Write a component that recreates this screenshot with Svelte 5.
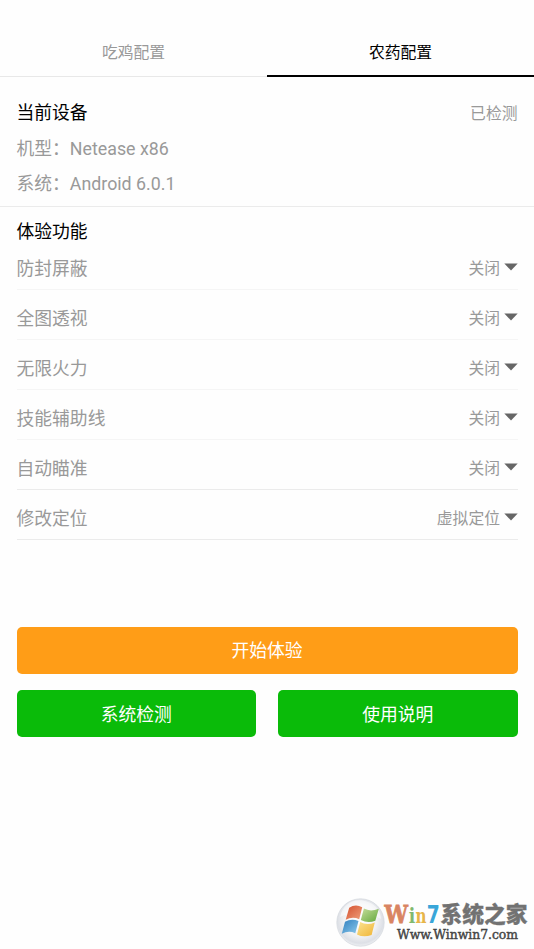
<script>
  let activeTab = 1;
  const tabs = ['吃鸡配置', '农药配置'];

  const device = [
    { label: '机型：', value: 'Netease x86' },
    { label: '系统：', value: 'Android 6.0.1' }
  ];

  const features = [
    { name: '防封屏蔽', value: '关闭' },
    { name: '全图透视', value: '关闭' },
    { name: '无限火力', value: '关闭' },
    { name: '技能辅助线', value: '关闭' },
    { name: '自动瞄准', value: '关闭' },
    { name: '修改定位', value: '虚拟定位' }
  ];
</script>

<main>
  <nav>
    {#each tabs as tab, i}
      <button class="tab" class:active={activeTab === i} on:click={() => (activeTab = i)}>{tab}</button>
    {/each}
  </nav>

  <section class="device">
    <div class="line">
      <h2>当前设备</h2>
      <span class="status">已检测</span>
    </div>
    {#each device as item}
      <div class="line">{item.label}{item.value}</div>
    {/each}
  </section>

  <section class="features">
    <h2>体验功能</h2>
    {#each features as feature, i}
      <div class="feature" class:strong={i > 3}>
        <span class="label">{feature.name}</span>
        <span class="select">
          {feature.value}
          <svg width="14" height="8" viewBox="0 0 14 8">
            <path d="M.3.6h13.4L7 7.4z" fill="#666" />
          </svg>
        </span>
      </div>
    {/each}
  </section>

  <div class="actions">
    <button class="btn start">开始体验</button>
    <div class="pair">
      <button class="btn">系统检测</button>
      <button class="btn">使用说明</button>
    </div>
  </div>

  <svg class="watermark" width="204" height="59" viewBox="0 0 204 59">
    <defs>
      <radialGradient id="orb" cx="50%" cy="45%" r="55%">
        <stop offset="0" stop-color="#fff" />
        <stop offset=".62" stop-color="#f1f2f4" />
        <stop offset=".88" stop-color="#dde0e6" />
        <stop offset="1" stop-color="#eef0f3" />
      </radialGradient>
      <linearGradient id="red" x2="1" y2="1">
        <stop offset="0" stop-color="#d4502f" />
        <stop offset="1" stop-color="#efa07c" />
      </linearGradient>
      <linearGradient id="green" x2="1" y2="1">
        <stop offset="0" stop-color="#c5dd9b" />
        <stop offset="1" stop-color="#63a83c" />
      </linearGradient>
      <linearGradient id="blue" x2="1" y2="1">
        <stop offset="0" stop-color="#2f7fbe" />
        <stop offset="1" stop-color="#8cc9ec" />
      </linearGradient>
      <linearGradient id="yellow" x2="1" y2="1">
        <stop offset="0" stop-color="#fbe392" />
        <stop offset="1" stop-color="#f0b434" />
      </linearGradient>
    </defs>
    <circle cx="30.5" cy="32.5" r="23.7" fill="url(#orb)" stroke="#d3d7dd" stroke-width=".7" />
    <path d="M10 27C13 12 27 7 38 12C47 15 51 23 51 29C38 22 23 21 10 27z" fill="#fff" opacity=".5" />
    <path d="M19.2 17.7Q25.5 13.6 32.2 17.2L29.2 29.2Q22.4 26 15.7 29.8z" fill="url(#red)" />
    <path d="M33.9 18.6Q40.5 22.2 48.8 18.7L45.3 30.8Q37.7 33.6 30.8 30z" fill="url(#green)" />
    <path d="M15 31.7Q21.6 28 28.5 31L25.3 43.2Q18.7 40 11.8 43.7z" fill="url(#blue)" />
    <path d="M30.2 32Q36.9 35.6 44.8 32.4L41.6 44.9Q33.7 48 27 44.4z" fill="url(#yellow)" />

    <g class="brand">
      <text class="w" x="54.5" y="32.5" textLength="23.5" lengthAdjust="spacingAndGlyphs">W</text>
      <text class="i" x="78.8" y="32.5" textLength="6.5" lengthAdjust="spacingAndGlyphs">i</text>
      <text class="n" x="85.5" y="32.5" textLength="11" lengthAdjust="spacingAndGlyphs">n</text>
      <text class="seven" x="96.7" y="32.5" textLength="13" lengthAdjust="spacingAndGlyphs">7</text>
    </g>
    <text class="name" x="110.5" y="32" textLength="87" lengthAdjust="spacingAndGlyphs">系统之家</text>
    <text class="url" x="67" y="49" textLength="121" lengthAdjust="spacingAndGlyphs">Www.Winwin7.com</text>
  </svg>
</main>

<style>
  :global(body) {
    margin: 0;
    background: #fefefe;
  }

  main {
    position: relative;
    height: 949px;
    overflow: hidden;
    font-family: Roboto, 'Noto Sans CJK SC', sans-serif;
    font-size: 17.8px;
    color: #999;
  }

  button {
    border: 0;
    padding: 0;
    font-family: inherit;
    cursor: pointer;
  }

  nav {
    display: flex;
    height: 77px;
  }

  .tab {
    flex: 1;
    box-sizing: border-box;
    padding-top: 26px;
    border-bottom: 1px solid #e8e8e8;
    background: none;
    font-size: 15.8px;
    color: #999;
  }

  .tab.active {
    padding-top: 27px;
    border-bottom: 2px solid #000;
    color: #000;
  }

  h2 {
    margin: 0;
    font-size: 17.8px;
    font-weight: 400;
    color: #000;
  }

  .device {
    box-sizing: border-box;
    height: 130px;
    padding: 18px 16.5px 0;
    border-bottom: 1px solid #ebebeb;
  }

  .line {
    display: flex;
    justify-content: space-between;
    height: 35.5px;
    line-height: 35.5px;
  }

  .status {
    padding-top: 1px;
    font-size: 15.8px;
  }

  .features {
    padding: 16px 16.5px 0;
  }

  .features h2 {
    height: 17px;
    line-height: 18px;
  }

  .feature {
    display: flex;
    align-items: center;
    justify-content: space-between;
    box-sizing: border-box;
    height: 50px;
    padding-top: 6px;
    border-bottom: 1px solid #f5f5f5;
  }

  .feature.strong {
    border-color: #ebebeb;
  }

  .label {
    padding-bottom: 2px;
  }

  .select {
    display: flex;
    align-items: center;
    gap: 3.5px;
    font-size: 15.8px;
  }

  .select svg {
    margin-bottom: 1px;
  }

  .actions {
    display: flex;
    flex-direction: column;
    gap: 16.5px;
    padding: 87px 16.5px 0;
  }

  .pair {
    display: flex;
    gap: 22px;
  }

  .btn {
    flex: 1;
    height: 47px;
    padding-bottom: 2px;
    border-radius: 5px;
    background: #0abb09;
    font-size: 17.8px;
    color: #fff;
  }

  .start {
    flex: none;
    height: 46.5px;
    background: #ff9d17;
  }

  .watermark {
    position: absolute;
    right: 0;
    bottom: 0;
  }

  .brand {
    font-family: 'DejaVu Serif', serif;
    font-size: 24px;
    font-weight: 700;
  }

  .w {
    fill: #d98462;
    stroke: #d98462;
    stroke-width: 0.8;
  }

  .i {
    font-size: 20px;
    fill: #80b96f;
  }

  .n {
    font-size: 20px;
    fill: #e7b548;
  }

  .seven {
    font-family: 'DejaVu Sans', sans-serif;
    fill: #39a6d9;
  }

  .name {
    font-family: 'Noto Sans CJK SC', sans-serif;
    font-size: 21.5px;
    font-weight: 900;
    fill: #727272;
    stroke: #727272;
    stroke-width: 0.3;
  }

  .url {
    font-family: 'DejaVu Serif', serif;
    font-size: 13px;
    font-weight: 400;
    fill: #444;
    stroke: #444;
    stroke-width: 0.45;
  }
</style>
